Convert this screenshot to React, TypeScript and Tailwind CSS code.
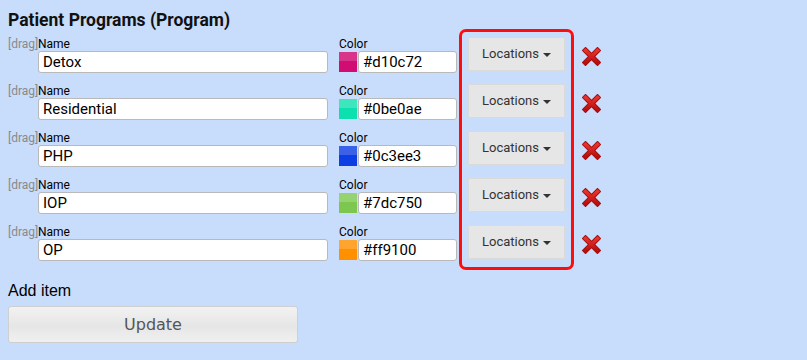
import React from "react";

type Program = { name: string; color: string; top: string };

const programs: Program[] = [
  { name: "Detox", color: "#d10c72", top: "#d8358a" },
  { name: "Residential", color: "#0be0ae", top: "#3de6bd" },
  { name: "PHP", color: "#0c3ee3", top: "#3a61e8" },
  { name: "IOP", color: "#7dc750", top: "#95d270" },
  { name: "OP", color: "#ff9100", top: "#ffa42f" },
];

const roboto = { fontFamily: "Roboto, 'Noto Sans', sans-serif" };

function DeleteIcon() {
  return (
    <svg width="19" height="19" viewBox="0 0 19 19">
      <defs>
        <linearGradient id="xg" x1="0" y1="0" x2="0" y2="1">
          <stop offset="0" stopColor="#e8322c" />
          <stop offset="1" stopColor="#b80f0f" />
        </linearGradient>
      </defs>
      <path d="M3.5 3.5 L15.5 15.5 M15.5 3.5 L3.5 15.5" stroke="#a10d0d" strokeWidth="5.4" strokeLinecap="square" />
      <path d="M3.5 3.5 L15.5 15.5 M15.5 3.5 L3.5 15.5" stroke="url(#xg)" strokeWidth="3.6" strokeLinecap="square" />
    </svg>
  );
}

function Row({ p }: { p: Program }) {
  return (
    <div className="flex h-[47px]">
      <span className="w-[30px] pt-[2px] text-[12px] leading-[14px] text-[#8a8a8a]" style={roboto}>
        [drag]
      </span>
      <div className="flex w-[290px] flex-col">
        <span className="h-[16px] pt-[2px] text-[12px] leading-[14px] text-black" style={roboto}>
          Name
        </span>
        <div
          className="flex h-[22px] items-center rounded-[3px] border border-[#b9b9b9] bg-white pl-[4px] text-[15px] text-black"
          style={roboto}
        >
          {p.name}
        </div>
      </div>
      <div className="ml-[11px] flex flex-col">
        <span className="h-[16px] pt-[2px] text-[12px] leading-[14px] text-black" style={roboto}>
          Color
        </span>
        <div className="flex">
          <div className="mt-[1px] flex h-[20px] w-[18px] flex-col">
            <div className="h-[9px]" style={{ background: p.top }} />
            <div className="h-[11px]" style={{ background: p.color }} />
          </div>
          <div
            className="ml-[1px] flex h-[22px] w-[99px] items-center rounded-[3px] border border-[#b9b9b9] bg-white pl-[4px] text-[15px] text-black"
            style={roboto}
          >
            {p.color}
          </div>
        </div>
      </div>
    </div>
  );
}

export default function App() {
  return (
    <div className="min-h-[360px] w-full bg-[#c8dcfb] pl-[8px] pt-[8px]">
      <h2 className="h-[27px] text-[17.5px] font-bold leading-[24px] text-[#111]" style={roboto}>
        Patient Programs (Program)
      </h2>
      <div className="flex">
        <div className="flex flex-col">
          {programs.map((p) => (
            <Row key={p.name} p={p} />
          ))}
        </div>
        <div className="ml-[2px] mt-[-6px] flex h-[241px] w-[115px] flex-col gap-[13px] rounded-[7px] border-[3px] border-[#ff0d0d] pl-[6px] pr-[3px] pt-[5px]">
          {programs.map((p) => (
            <button
              key={p.name}
              className="flex h-[34px] w-[97px] shrink-0 items-center justify-center gap-[4px] border border-[#dadada] bg-[#e6e6e6] text-[13px] text-[#333]"
              style={roboto}
            >
              Locations
              <span className="mt-[1px] h-0 w-0 border-x-[4px] border-t-[4px] border-x-transparent border-t-[#333]" />
            </button>
          ))}
        </div>
        <div className="ml-[8px] flex flex-col">
          {programs.map((p) => (
            <div key={p.name} className="flex h-[47px] items-start pt-[12px]">
              <DeleteIcon />
            </div>
          ))}
        </div>
      </div>
      <div
        className="h-[36px] pt-[11px] text-[16px] leading-[20px] text-black"
        style={{ fontFamily: "'Liberation Sans', Arial, sans-serif" }}
      >
        Add item
      </div>
      <button
        className="flex h-[37px] w-[290px] items-center justify-center rounded-[3px] border border-[#cfcfcf] bg-[linear-gradient(#f2f2f2,#e6e6e6_55%,#f0f0f0)] text-[16px] text-[#555]"
        style={{ fontFamily: "'DejaVu Sans', sans-serif" }}
      >
        Update
      </button>
    </div>
  );
}
